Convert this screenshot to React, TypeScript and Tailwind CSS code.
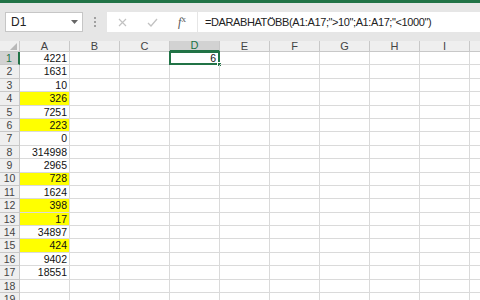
import { Fragment } from 'react';

const cols = ['A', 'B', 'C', 'D', 'E', 'F', 'G', 'H', 'I', 'J'];

// A oszlop értékei, sárga = 10 és 1000 közé esik
const values: { v: string; hl?: boolean }[] = [
  { v: '4221' },
  { v: '1631' },
  { v: '10' },
  { v: '326', hl: true },
  { v: '7251' },
  { v: '223', hl: true },
  { v: '0' },
  { v: '314998' },
  { v: '2965' },
  { v: '728', hl: true },
  { v: '1624' },
  { v: '398', hl: true },
  { v: '17', hl: true },
  { v: '34897' },
  { v: '424', hl: true },
  { v: '9402' },
  { v: '18551' },
  { v: '' },
  { v: '' },
];

const FormulaBar = () => (
  <div className="flex h-[38px] items-center bg-[#e6e6e6] pl-[5px]">
    <div className="flex h-[20px] w-[78px] items-center justify-between border border-[#c6c6c6] bg-white pl-[5px] pr-[4px] text-[12px] text-[#222]">
      <span>D1</span>
      <svg width="7" height="4" viewBox="0 0 7 4">
        <path d="M0 0h7L3.5 4z" fill="#666" />
      </svg>
    </div>
    <div className="flex w-[24px] flex-col items-center justify-center gap-[2px]">
      <div className="h-[2px] w-[2px] bg-[#a0a0a0]" />
      <div className="h-[2px] w-[2px] bg-[#a0a0a0]" />
      <div className="h-[2px] w-[2px] bg-[#a0a0a0]" />
    </div>
    <div className="flex h-[20px] w-[90px] items-center bg-white">
      <div className="flex w-[30px] justify-center">
        <svg width="9" height="9" viewBox="0 0 9 9">
          <path d="M1 1l7 7M8 1L1 8" stroke="#c2c2c2" strokeWidth="1.2" />
        </svg>
      </div>
      <div className="flex w-[30px] justify-center">
        <svg width="11" height="9" viewBox="0 0 11 9">
          <path d="M1 5l3 3 6-7" stroke="#c2c2c2" strokeWidth="1.3" fill="none" />
        </svg>
      </div>
      <div className="flex w-[30px] justify-center font-['Liberation_Serif',serif] text-[12px] italic text-[#555]">
        f<span className="text-[9px] not-italic">x</span>
      </div>
    </div>
    <div className="ml-[1px] flex h-[20px] flex-1 items-center bg-white pl-[7px] text-[11px] tracking-[-0.4px] text-[#222]">
      =DARABHATÖBB(A1:A17;"&gt;10";A1:A17;"&lt;1000")
    </div>
  </div>
);

export default function App() {
  return (
    <div className="h-[300px] w-[480px] overflow-hidden bg-white font-['Liberation_Sans',Arial,sans-serif]">
      <div className="h-[3px] bg-[#217346]" />
      <FormulaBar />
      <div className="grid grid-cols-[20px_repeat(10,50px)] grid-rows-[11px] auto-rows-[13.4px]">
        <div className="relative border-b border-r border-[#c8c8c8] bg-[#efefef]">
          <svg className="absolute bottom-[1px] right-[2px]" width="7" height="7" viewBox="0 0 7 7">
            <path d="M7 0v7H0z" fill="#b8b8b8" />
          </svg>
        </div>
        {cols.map((c) => (
          <div
            key={c}
            className={`flex items-center justify-center border-r text-[11px] leading-none ${
              c === 'D'
                ? 'border-b-2 border-[#c8c8c8] border-b-[#217346] bg-[#d2d2d2] text-[#217346]'
                : 'border-b border-[#c8c8c8] bg-[#efefef] text-[#444]'
            }`}
          >
            {c}
          </div>
        ))}
        {values.map((row, i) => (
          <Fragment key={i}>
            <div
              className={`flex items-center justify-center border-b text-[10.5px] leading-none ${
                i === 0
                  ? 'border-r-2 border-[#c8c8c8] border-r-[#217346] bg-[#d2d2d2] text-[#217346]'
                  : 'border-r border-[#c8c8c8] bg-[#efefef] text-[#444]'
              }`}
            >
              {i + 1}
            </div>
            {cols.map((c) => (
              <div
                key={c}
                className={`relative flex items-center justify-end border-b border-r border-[#dadada] pr-[2px] text-[10.5px] leading-none text-[#111] ${
                  c === 'A' && row.hl ? 'bg-[#ffff00]' : ''
                }`}
              >
                {c === 'A' ? row.v : ''}
                {c === 'D' && i === 0 && (
                  <>
                    <div className="absolute -left-[1px] -top-[1px] bottom-[-1px] right-[-1px] flex items-center justify-end border-2 border-[#217346] pr-[2px]">
                      6
                    </div>
                    <div className="absolute bottom-[-3px] right-[-3px] h-[5px] w-[5px] border border-white bg-[#217346]" />
                  </>
                )}
              </div>
            ))}
          </Fragment>
        ))}
      </div>
    </div>
  );
}
